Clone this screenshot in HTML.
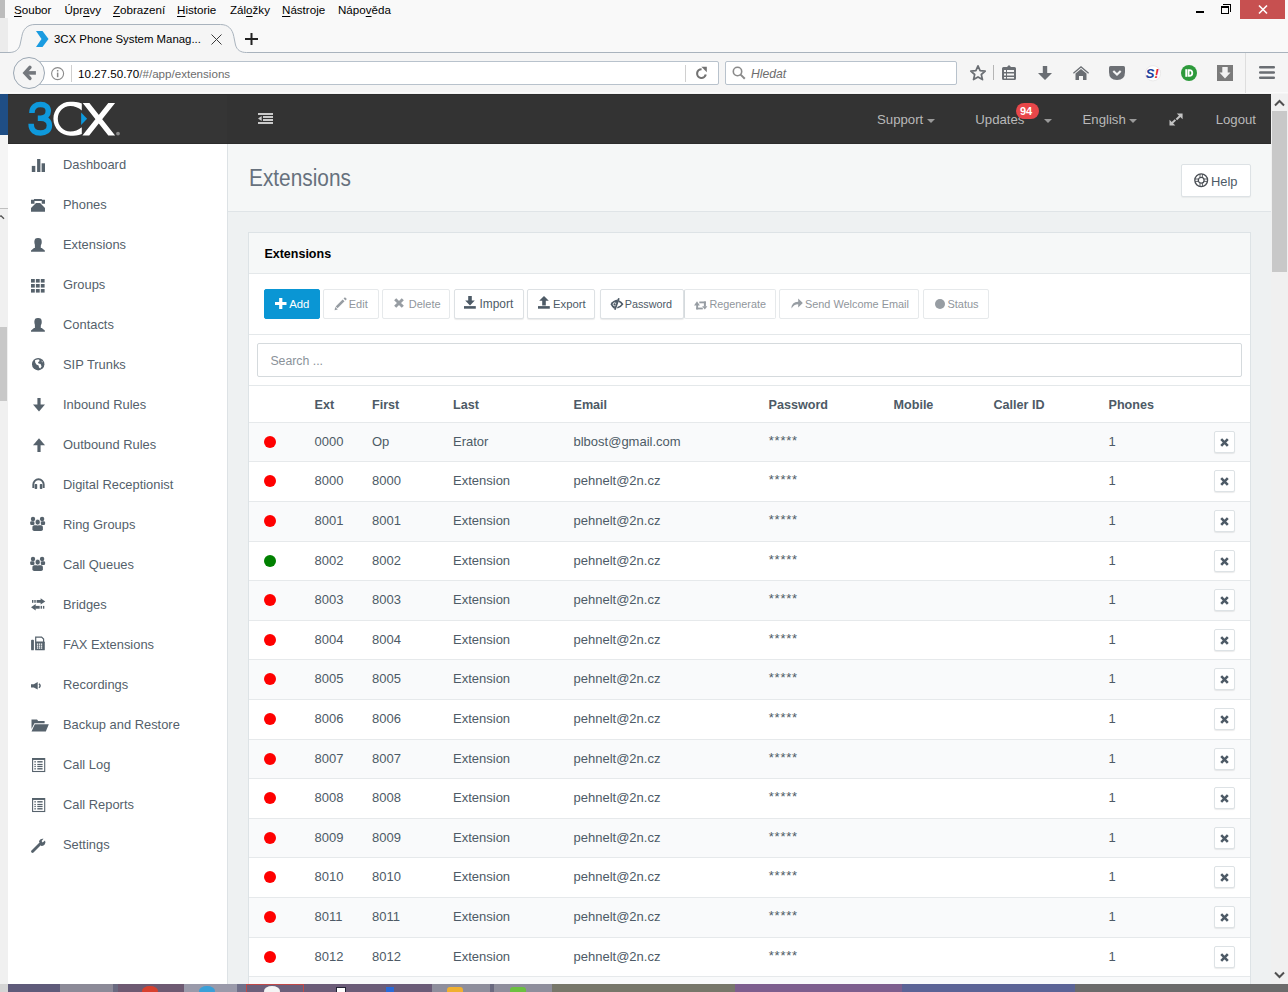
<!DOCTYPE html>
<html><head><meta charset="utf-8">
<style>
*{box-sizing:border-box;margin:0;padding:0}
html,body{width:1288px;height:992px;overflow:hidden;background:#f9f9f9;font-family:"Liberation Sans",sans-serif;position:relative}
.a{position:absolute}
.t{position:absolute;white-space:nowrap;line-height:1}
svg{position:absolute;overflow:visible}
.menu{font-size:11.6px;color:#000;top:3.9px}
.menu u{text-decoration:underline;text-underline-offset:1.5px;text-decoration-thickness:1px}
.hl{font-size:13.2px;color:#b9b9b9;top:112.8px}
.caret{position:absolute;width:0;height:0;border-left:4px solid transparent;border-right:4px solid transparent;border-top:4px solid #9a9a9a}
.si{font-size:12.9px;color:#545f6b;left:63px}
.btn{position:absolute;top:289px;height:30px;border:1px solid #e6e9eb;border-radius:2px;background:#fff;white-space:nowrap}
.btn.en{border-color:#dde1e4;box-shadow:0 1px 1px rgba(0,0,0,.08)}
.bt{position:absolute;top:9px;font-size:11px;line-height:1;color:#90969c}
.en .bt{color:#4d5a66}
.row{position:absolute;left:249px;width:1001px;height:39.57px;border-top:1px solid #e6e9eb}
.row.odd{background:#f9fafb}
.row .t{font-size:13px;color:#4d5a66;top:11.8px}
.dot{position:absolute;left:14.9px;top:12.5px;width:12px;height:12px;border-radius:50%;background:#f00}
.xb{position:absolute;left:965px;top:8.3px;width:20.5px;height:21.5px;border:1px solid #dde2e5;border-radius:2px;background:#fff;box-shadow:0 1px 1px rgba(0,0,0,.08)}
.xb svg{left:4.5px;top:5.5px}
.th{font-size:12.6px;font-weight:bold;color:#4d5a66;top:399.3px}
</style></head>
<body>
<!-- ===== window / menu ===== -->
<div class="a" style="left:0;top:0;width:5px;height:18px;background:#bcbcbc"></div>
<div class="a" style="left:0;top:18px;width:8px;height:34px;background:#ececec"></div>
<div class="t menu" style="left:14px"><u>S</u>oubor</div>
<div class="t menu" style="left:64.4px">Úpr<u>a</u>vy</div>
<div class="t menu" style="left:113px"><u>Z</u>obrazení</div>
<div class="t menu" style="left:177px"><u>H</u>istorie</div>
<div class="t menu" style="left:230px">Zál<u>o</u>žky</div>
<div class="t menu" style="left:282px"><u>N</u>ástroje</div>
<div class="t menu" style="left:338px">Nápo<u>v</u>ěda</div>
<div class="a" style="left:1196px;top:11px;width:8px;height:2px;background:#000"></div>
<div class="a" style="left:1221px;top:6px;width:8px;height:8px;border:1px solid #000;border-top-width:2px"></div>
<div class="a" style="left:1223px;top:4px;width:8px;height:8px;border-top:1px solid #000;border-right:1px solid #000"></div>
<div class="a" style="left:1240px;top:0;width:45px;height:19px;background:#c75050"></div>
<svg style="left:1258px;top:5px" width="10" height="9"><path d="M1 0.5L9 8.5M9 0.5L1 8.5" stroke="#fff" stroke-width="1.6"/></svg>
<!-- tab -->
<svg style="left:0;top:0" width="1288" height="54"><path d="M0 52.5H9C15 52.5 18.5 50 20 45L21.8 36.5C23 29 27.5 24.5 35 24.5H220.5C228 24.5 232.5 29 233.8 36.5L235.5 45C237 50 240.5 52.5 246.5 52.5H1288V54H0Z" fill="#f5f5f5"/><path d="M0 52.5H9C15 52.5 18.5 50 20 45L21.8 36.5C23 29 27.5 24.5 35 24.5H220.5C228 24.5 232.5 29 233.8 36.5L235.5 45C237 50 240.5 52.5 246.5 52.5H1288" fill="none" stroke="#a9b3bd" stroke-width="1"/></svg>
<svg style="left:35.5px;top:31px" width="13" height="16"><path d="M0 0H6.5L12.5 8L6.5 16H0L5.5 8Z" fill="#1a9be0"/></svg>
<div class="t" style="left:54px;top:34.2px;font-size:11.4px;color:#000">3CX Phone System Manag...</div>
<svg style="left:211px;top:34px" width="11" height="11"><path d="M0.5 0.5L10.5 10.5M10.5 0.5L0.5 10.5" stroke="#3a3a3a" stroke-width="1"/></svg>
<svg style="left:244.5px;top:33px" width="13" height="12"><path d="M6.5 0V12M0 6H13" stroke="#222" stroke-width="2"/></svg>
<!-- nav -->
<div class="a" style="left:0;top:53px;width:1288px;height:41px;background:#f5f5f5"></div>
<div class="a" style="left:0;top:92px;width:1288px;height:1px;background:#fafafa"></div>
<div class="a" style="left:30px;top:61px;width:689px;height:24px;background:#fff;border:1px solid #b8c2cc;border-radius:0 2px 2px 0"></div>
<div class="a" style="left:13px;top:57px;width:32px;height:32px;border-radius:50%;border:1px solid #9ba7b3;background:#f5f5f5"></div>
<svg style="left:20px;top:64px" width="18" height="18"><path d="M9.9 3.4L4.9 8.9L9.9 14.4" stroke="#74787d" stroke-width="3.5" stroke-linecap="round" fill="none"/><path d="M5 8.9H15.9" stroke="#74787d" stroke-width="3.6"/></svg>
<svg style="left:51px;top:66.5px" width="14" height="14"><circle cx="6.6" cy="6.6" r="6" fill="none" stroke="#8a8a8a" stroke-width="1.1"/><rect x="5.9" y="5.6" width="1.5" height="4.6" fill="#8a8a8a"/><rect x="5.9" y="3" width="1.5" height="1.5" fill="#8a8a8a"/></svg>
<div class="a" style="left:71px;top:64.5px;width:1px;height:17px;background:#cfcfcf"></div>
<div class="t" style="left:78px;top:68.1px;font-size:11.6px;color:#000">10.27.50.70<span style="color:#6d6d6d">/#/app/extensions</span></div>
<div class="a" style="left:685px;top:64.5px;width:1px;height:17px;background:#d0d0d0"></div>
<svg style="left:695px;top:66px" width="13" height="13"><path d="M6.6 3.2A4.4 4.4 0 1 0 10.8 8.6" fill="none" stroke="#737373" stroke-width="2.1"/><path d="M6.4 0.8H11.8V6.2Z" fill="#737373"/></svg>
<div class="a" style="left:725px;top:61px;width:232px;height:24px;background:#fff;border:1px solid #b8c2cc;border-radius:2px"></div>
<svg style="left:732px;top:66px" width="14" height="14"><circle cx="5.5" cy="5.5" r="4.2" fill="none" stroke="#8a8a8a" stroke-width="1.6"/><path d="M8.6 8.6L12.8 12.8" stroke="#8a8a8a" stroke-width="2"/></svg>
<div class="t" style="left:751px;top:67.5px;font-size:12.2px;color:#6d6d6d;font-style:italic">Hledat</div>
<svg style="left:969px;top:64px" width="18" height="18"><path d="M9 1.8L11.1 6.6L16.2 7.1L12.3 10.5L13.5 15.6L9 12.9L4.5 15.6L5.7 10.5L1.8 7.1L6.9 6.6Z" fill="none" stroke="#6a6e73" stroke-width="1.7" stroke-linejoin="round"/></svg>
<div class="a" style="left:993px;top:65px;width:1px;height:15px;background:#b5b5b5"></div>
<svg style="left:1002px;top:65px" width="14" height="15"><path d="M7 0L9 2H12.5Q14 2 14 3.5V13.5Q14 15 12.5 15H1.5Q0 15 0 13.5V3.5Q0 2 1.5 2H5Z" fill="#6a6e73"/><rect x="2" y="5" width="2" height="2" fill="#f5f5f5"/><rect x="5" y="5" width="7" height="2" fill="#f5f5f5"/><rect x="2" y="8.5" width="2" height="2" fill="#f5f5f5"/><rect x="5" y="8.5" width="7" height="2" fill="#f5f5f5"/><rect x="2" y="12" width="2" height="1.5" fill="#f5f5f5"/><rect x="5" y="12" width="7" height="1.5" fill="#f5f5f5"/></svg>
<svg style="left:1038px;top:66px" width="14" height="14"><path d="M4.8 0H9.2V7H14L7 14L0 7H4.8Z" fill="#6a6e73"/></svg>
<svg style="left:1073px;top:66px" width="16" height="14"><path d="M8 0L16 6.8L15.2 7.7L8 1.7L0.8 7.7L0 6.8Z" fill="#6a6e73"/><path d="M2.5 7.5L8 3L13.5 7.5V14H10V10H6V14H2.5Z" fill="#6a6e73"/></svg>
<svg style="left:1109px;top:66px" width="16" height="14"><path d="M0 1.5Q0 0 1.5 0H14.5Q16 0 16 1.5V6Q16 14 8 14Q0 14 0 6Z" fill="#6d7075"/><path d="M4.3 5L8 8.6L11.7 5" fill="none" stroke="#f5f5f5" stroke-width="2.1"/></svg>
<svg style="left:1145px;top:65px" width="16" height="16"><circle cx="8" cy="8.3" r="7.6" fill="#fff" stroke="#ddd" stroke-width="0.6"/><text x="0.8" y="13" font-family="Liberation Sans" font-weight="bold" font-style="italic" font-size="13" fill="#1d3f9c">S</text><text x="9.5" y="13" font-family="Liberation Sans" font-weight="bold" font-style="italic" font-size="13" fill="#e3262e">!</text></svg>
<svg style="left:1181px;top:65px" width="16" height="16"><circle cx="8" cy="8" r="8" fill="#2d9a3b"/><rect x="4.3" y="4.2" width="2" height="7.6" fill="#fff"/><path d="M7.6 5.1H8.4A2.9 2.9 0 0 1 8.4 10.9H7.6Z" fill="none" stroke="#fff" stroke-width="1.8"/></svg>
<svg style="left:1217px;top:65px" width="16" height="16"><rect width="16" height="16" fill="#7b7b7b"/><path d="M5.3 2H10.7V7.5H13.5L8 13.5L2.5 7.5H5.3Z" fill="#f2f2f2"/></svg>
<div class="a" style="left:1245px;top:53px;width:1px;height:40px;background:#dedede"></div>
<svg style="left:1259px;top:66px" width="16" height="13"><path d="M1.2 1.3H14.8M1.2 6.5H14.8M1.2 11.7H14.8" stroke="#6a6e73" stroke-width="2.5" stroke-linecap="round"/></svg>
<!-- ===== page ===== -->
<div class="a" style="left:0;top:94px;width:8px;height:890px;background:#f0f0f0"></div>
<div class="a" style="left:0;top:94px;width:8px;height:41px;background:#1f4e85"></div>
<div class="a" style="left:0;top:135px;width:8px;height:73px;background:#f5f5f5"></div>
<div class="a" style="left:0;top:208px;width:8px;height:1px;background:#c0c0c0"></div>
<div class="a" style="left:0;top:327px;width:7px;height:74px;background:#c8c8c8"></div><svg style="left:0;top:215px" width="6" height="6"><path d="M0 1.5L1 0.8L4 3.8" stroke="#505050" stroke-width="1.4" fill="none"/></svg>

<div class="a" style="left:8px;top:94px;width:1263px;height:50px;background:#333;border-top:1px solid #2c2c2c;border-bottom:1px solid #2c2c2c"></div><div class="a" style="left:8px;top:95px;width:219px;height:48px;background:#353535"></div>
<svg style="left:28px;top:102px" width="92" height="34">
<path d="M3.9 11C3.9 4.8 8.2 2.6 12.6 2.6C17.5 2.6 20.3 5.2 20.3 8.8C20.3 13 17 16.2 12.8 16.2H9.8M9.8 16.2H12.8C18 16.2 21.4 18.8 21.4 23.5C21.4 28.5 17.4 31 12.6 31C7.5 31 3.1 29 3.1 21.8" fill="none" stroke="#0e99dc" stroke-width="5.5"/>
<path d="M53.8 1.6C50 -0.2 46 -0.2 42.3 -0.2C33 -0.2 25.4 7.4 25.4 16.8C25.4 26.2 33 33.7 42.3 33.7C46 33.7 50 33.5 53.8 32V25.2C50.5 28 46.5 29.5 42.3 29.5C35.4 29.5 29.8 23.8 29.8 16.8C29.8 9.8 35.4 4 42.3 4C46.5 4 50.5 5.6 53.8 8.5Z" fill="#fff"/>
<path d="M53.1 10.6L59.1 16.85L53.1 23.1Z" fill="#0e99dc"/>
<path d="M54.7 0.9H61.4L87.1 33.5H80.3Z M80.3 0.9H87.1L61.2 33.5H54.4Z" fill="#fff"/>
<circle cx="90" cy="31.6" r="1.9" fill="#8a8a8a"/>
</svg>
<svg style="left:257.6px;top:113px" width="15" height="11"><path d="M0 1H15M5 4H15M5 7H15M0 10H15" stroke="#cacaca" stroke-width="2"/><path d="M0 5.5L3.7 3V8Z" fill="#cacaca"/></svg>
<div class="t hl" style="left:877px">Support</div>
<div class="caret" style="left:927px;top:119px"></div>
<div class="t hl" style="left:975.3px">Updates</div>
<div class="a" style="left:1016px;top:102.7px;width:23px;height:16px;border-radius:8px;background:#e8474a"></div>
<div class="t" style="left:1020px;top:106px;font-size:11px;font-weight:bold;color:#fff">94</div>
<div class="caret" style="left:1044px;top:119px"></div>
<div class="t hl" style="left:1082.5px">English</div>
<div class="caret" style="left:1129px;top:119px"></div>
<svg style="left:1169px;top:112.5px" width="14" height="13"><path d="M7.8 0.5H13.6V6.3Z M0.5 6.8V12.6H6.3Z" fill="#c4c4c4"/><path d="M11.8 2.3L7.4 6.4M2.3 10.8L6.4 6.9" stroke="#c4c4c4" stroke-width="2"/></svg>
<div class="t hl" style="left:1215.7px">Logout</div>

<div class="a" style="left:8px;top:144px;width:220px;height:840px;background:#fff;border-right:1px solid #dde2e5"></div>
<div class="t si" style="top:159.1px">Dashboard</div>
<div class="t si" style="top:199.1px">Phones</div>
<div class="t si" style="top:239.1px">Extensions</div>
<div class="t si" style="top:279.1px">Groups</div>
<div class="t si" style="top:319.1px">Contacts</div>
<div class="t si" style="top:359.1px">SIP Trunks</div>
<div class="t si" style="top:399.1px">Inbound Rules</div>
<div class="t si" style="top:439.1px">Outbound Rules</div>
<div class="t si" style="top:479.1px">Digital Receptionist</div>
<div class="t si" style="top:519.1px">Ring Groups</div>
<div class="t si" style="top:559.1px">Call Queues</div>
<div class="t si" style="top:599.1px">Bridges</div>
<div class="t si" style="top:639.1px">FAX Extensions</div>
<div class="t si" style="top:679.1px">Recordings</div>
<div class="t si" style="top:719.1px">Backup and Restore</div>
<div class="t si" style="top:759.1px">Call Log</div>
<div class="t si" style="top:799.1px">Call Reports</div>
<div class="t si" style="top:839.1px">Settings</div>
<!-- sidebar icons -->
<svg style="left:31px;top:158px" width="15" height="14" fill="#56626c"><rect x="0.8" y="7.9" width="3.5" height="6.1"/><rect x="6.1" y="1" width="3.3" height="13"/><rect x="10.6" y="5.3" width="3.4" height="8.7"/></svg>
<svg style="left:31px;top:199px" width="15" height="13" fill="#56626c"><path d="M3 0H10.7L11 0.8H14V4.8H10.7V2H3.5V4.8H0V0.8H3Z"/><path d="M5 4H9.1L14 9V12.7H0V9Z"/></svg>
<svg style="left:31px;top:238px" width="15" height="14" fill="#56626c"><rect x="3.4" y="0" width="7.3" height="7.9" rx="3.4"/><rect x="3.9" y="6" width="5.9" height="4.5"/><path d="M3 10H10.8L13.85 12.4V13.8H0V12.4Z"/></svg>
<svg style="left:31px;top:278.6px" width="14" height="14" fill="#56626c"><rect x="0" y="0" width="3.8" height="3.6"/><rect x="4.9" y="0" width="3.8" height="3.6"/><rect x="9.8" y="0" width="3.8" height="3.6"/><rect x="0" y="5" width="3.8" height="3.6"/><rect x="4.9" y="5" width="3.8" height="3.6"/><rect x="9.8" y="5" width="3.8" height="3.6"/><rect x="0" y="10" width="3.8" height="3.6"/><rect x="4.9" y="10" width="3.8" height="3.6"/><rect x="9.8" y="10" width="3.8" height="3.6"/></svg>
<svg style="left:31px;top:318px" width="15" height="14" fill="#56626c"><rect x="3.4" y="0" width="7.3" height="7.9" rx="3.4"/><rect x="3.9" y="6" width="5.9" height="4.5"/><path d="M3 10H10.8L13.85 12.4V13.8H0V12.4Z"/></svg>
<svg style="left:32px;top:358px" width="13" height="13"><circle cx="6.2" cy="6.2" r="6.2" fill="#56626c"/><path d="M3 2.2Q5 1 7 1.6L7.6 3L6 4.2L6.6 5.6L8.6 6L9.6 8.5L8.2 10.6L7 9.6L6.6 7.4L4.4 6.6L3.2 4.6Z" fill="#fff"/><path d="M9.3 2.6L10.6 3.4L10.4 4.8Z" fill="#fff"/></svg>
<svg style="left:32.7px;top:398px" width="12" height="14" fill="#56626c"><rect x="4.4" y="0" width="3.2" height="7.5"/><path d="M0 6.6H12L6 13.6Z"/></svg>
<svg style="left:32.7px;top:438px" width="12" height="14" fill="#56626c"><rect x="4.4" y="6.5" width="3.2" height="7.5"/><path d="M0 7.2H12L6 0.2Z"/></svg>
<svg style="left:31.7px;top:478px" width="13" height="11"><path d="M1.3 10V6.5A5.2 5.2 0 0 1 11.7 6.5V10" fill="none" stroke="#56626c" stroke-width="1.9"/><rect x="2.6" y="6" width="2.6" height="5" rx="0.7" fill="#56626c"/><rect x="7.8" y="6" width="2.6" height="5" rx="0.7" fill="#56626c"/></svg>
<svg style="left:30.4px;top:516.7px" width="16" height="14" fill="#56626c"><circle cx="3" cy="2" r="2.2"/><circle cx="12.1" cy="2" r="2.2"/><rect x="0.2" y="4.3" width="4.3" height="3.6" rx="1.2"/><rect x="10.8" y="4.3" width="4.3" height="3.6" rx="1.2"/><rect x="2.4" y="8.3" width="10.5" height="5.7" rx="1.8"/><ellipse cx="7.7" cy="5.1" rx="2.6" ry="2.9" stroke="#fff" stroke-width="0.7"/></svg>
<svg style="left:30.4px;top:556.7px" width="16" height="14" fill="#56626c"><circle cx="3" cy="2" r="2.2"/><circle cx="12.1" cy="2" r="2.2"/><rect x="0.2" y="4.3" width="4.3" height="3.6" rx="1.2"/><rect x="10.8" y="4.3" width="4.3" height="3.6" rx="1.2"/><rect x="2.4" y="8.3" width="10.5" height="5.7" rx="1.8"/><ellipse cx="7.7" cy="5.1" rx="2.6" ry="2.9" stroke="#fff" stroke-width="0.7"/></svg>
<svg style="left:31px;top:598px" width="15" height="13" fill="#56626c"><rect x="1" y="2" width="1.4" height="2.8"/><rect x="3.3" y="2" width="1.4" height="2.8"/><rect x="5.6" y="2" width="4.5" height="2.8"/><path d="M9.6 0.2L14.3 3.4L9.6 6.6Z"/><path d="M0 9.3L4.7 6.1V12.5Z"/><rect x="4.2" y="7.9" width="4.5" height="2.8"/><rect x="9.6" y="7.9" width="1.4" height="2.8"/><rect x="11.9" y="7.9" width="1.4" height="2.8"/></svg>
<svg style="left:31px;top:636.4px" width="15" height="15" fill="#56626c"><rect x="0.1" y="3.7" width="2.8" height="10.6" rx="0.9"/><rect x="4.1" y="5.6" width="9.7" height="8.7" rx="0.6"/><path d="M4.7 1.1H10.6L12.6 3.1V6H4.7Z" fill="#fff" stroke="#56626c" stroke-width="1.2"/><g fill="#fff"><rect x="5.9" y="7.5" width="1.3" height="1.3"/><rect x="7.9" y="7.5" width="1.3" height="1.3"/><rect x="9.9" y="7.5" width="1.3" height="1.3"/><rect x="5.9" y="9.5" width="1.3" height="1.3"/><rect x="7.9" y="9.5" width="1.3" height="1.3"/><rect x="9.9" y="9.5" width="1.3" height="1.3"/><rect x="5.9" y="11.4" width="1.3" height="1.3"/><rect x="7.9" y="11.4" width="1.3" height="1.3"/><rect x="9.9" y="11.4" width="1.3" height="1.3"/></g></svg>
<svg style="left:30.7px;top:681.5px" width="12" height="8" fill="#56626c"><path d="M0 2.2H2.8L6.7 0V7.6L2.8 5.4H0Z"/><path d="M8 1.8Q10.2 3.8 8 5.8" fill="none" stroke="#56626c" stroke-width="1.5"/></svg>
<svg style="left:30.9px;top:719px" width="18" height="13" fill="#56626c"><path d="M0.5 0.5H6L7.2 2H13.6V4.2H3.4L0.5 10Z"/><path d="M3.8 5.2H17.8L14.8 12.6H0.5Z"/></svg>
<svg style="left:32px;top:758px" width="14" height="14"><rect x="0.6" y="0.6" width="12.1" height="12.9" fill="none" stroke="#56626c" stroke-width="1.1"/><rect x="0.05" y="0.05" width="12.7" height="1.9" fill="#56626c"/><g fill="#56626c"><rect x="2.4" y="3.1" width="1.4" height="1.4"/><rect x="5.3" y="3.1" width="5.3" height="1.4"/><rect x="2.4" y="5.9" width="1.4" height="1.2"/><rect x="5.3" y="5.9" width="5.3" height="1.2"/><rect x="2.4" y="7.9" width="1.4" height="1.2"/><rect x="5.3" y="7.9" width="5.3" height="1.2"/><rect x="2.4" y="10.1" width="1.4" height="1.4"/><rect x="5.3" y="10.1" width="5.3" height="1.4"/></g></svg>
<svg style="left:32px;top:798px" width="14" height="14"><rect x="0.6" y="0.6" width="12.1" height="12.9" fill="none" stroke="#56626c" stroke-width="1.1"/><rect x="0.05" y="0.05" width="12.7" height="1.9" fill="#56626c"/><g fill="#56626c"><rect x="2.4" y="3.1" width="1.4" height="1.4"/><rect x="5.3" y="3.1" width="5.3" height="1.4"/><rect x="2.4" y="5.9" width="1.4" height="1.2"/><rect x="5.3" y="5.9" width="5.3" height="1.2"/><rect x="2.4" y="7.9" width="1.4" height="1.2"/><rect x="5.3" y="7.9" width="5.3" height="1.2"/><rect x="2.4" y="10.1" width="1.4" height="1.4"/><rect x="5.3" y="10.1" width="5.3" height="1.4"/></g></svg>
<svg style="left:31px;top:837.8px" width="15" height="15"><path d="M1.5 13.5L9 6" stroke="#56626c" stroke-width="2.8" stroke-linecap="round"/><path d="M8 3.5A3.6 3.6 0 0 1 12.5 0.8L10.6 3L11.6 4.4L14 2.6A3.6 3.6 0 0 1 10 7.8Z" fill="#56626c"/></svg>

<!-- content -->
<div class="a" style="left:228px;top:144px;width:1043px;height:840px;background:#eef1f2"></div>
<div class="a" style="left:228px;top:144px;width:1043px;height:68px;background:#f5f7f7;border-bottom:1px solid #dfe4e7"></div>
<div class="t" style="left:249px;top:167.3px;font-size:23.5px;color:#66717d;transform:scaleX(0.887);transform-origin:0 0">Extensions</div>
<div class="a" style="left:1181px;top:164px;width:69.5px;height:33px;background:#fff;border:1px solid #dde2e5;border-radius:2px;box-shadow:0 1px 1px rgba(0,0,0,.05)"></div>
<svg style="left:1193.5px;top:173px" width="15" height="15"><circle cx="7.2" cy="7.2" r="6.4" fill="none" stroke="#4a4f55" stroke-width="1.3"/><circle cx="7.2" cy="7.2" r="2.9" fill="none" stroke="#4a4f55" stroke-width="1.3"/><path d="M6 1V4.3M8.4 1V4.3M6 10.1V13.4M8.4 10.1V13.4M1 6H4.3M1 8.4H4.3M10.1 6H13.4M10.1 8.4H13.4" stroke="#4a4f55" stroke-width="0.9"/></svg>
<div class="t" style="left:1211px;top:176.2px;font-size:12.9px;color:#4d5a66">Help</div>

<div class="a" style="left:248px;top:232px;width:1003px;height:760px;background:#fff;border:1px solid #dde3e6"></div>
<div class="a" style="left:249px;top:233px;width:1001px;height:41px;background:#f6f8f8;border-bottom:1px solid #e4e8ea"></div>
<div class="t" style="left:264.4px;top:248.2px;font-size:12.5px;font-weight:bold;color:#000">Extensions</div>
<div class="a" style="left:249px;top:334px;width:1001px;height:1px;background:#e4e8ea"></div>
<div class="a" style="left:249px;top:385px;width:1001px;height:1px;background:#e4e8ea"></div>

<div class="btn" style="left:264px;width:56px;background:#0a96d4;border-color:#0a96d4"><svg style="left:10px;top:8.2px" width="11.5" height="11"><path d="M5.75 0V11M0 5.5H11.5" stroke="#fff" stroke-width="3.2"/></svg><span class="bt" style="left:24.2px;color:#fff;font-size:11.35px;top:9.2px">Add</span></div>
<div class="btn" style="left:323.4px;width:55.4px"><svg style="left:9.6px;top:6.5px" width="14" height="14"><path d="M2.6 10.4L9.6 3.4M10.5 2.5L11.9 1.1" stroke="#979da3" stroke-width="2.7"/><path d="M0.6 13.2L1.2 10L3.8 12.6Z" fill="#979da3"/></svg><span class="bt" style="left:24.4px">Edit</span></div>
<div class="btn" style="left:382.4px;width:68.1px"><svg style="left:11px;top:8.2px" width="10" height="10"><path d="M1.2 1.2L8.8 8.8M8.8 1.2L1.2 8.8" stroke="#979da3" stroke-width="3"/></svg><span class="bt" style="left:25.4px">Delete</span></div>
<div class="btn en" style="left:453.5px;width:70.3px"><svg style="left:9.8px;top:6px" width="12" height="13" fill="#4d5a66"><path d="M4.2 0H7.8V4.6H10.8L6 9.4L1.2 4.6H4.2Z"/><rect x="0" y="10.1" width="11.8" height="2.6"/></svg><span class="bt" style="left:25px;font-size:11.9px;top:8.6px">Import</span></div>
<div class="btn en" style="left:527.2px;width:68px"><svg style="left:9.6px;top:6px" width="12" height="13" fill="#4d5a66"><path d="M4.2 9.4H7.8V4.8H10.8L6 0L1.2 4.8H4.2Z"/><rect x="0" y="10.1" width="11.8" height="2.6"/></svg><span class="bt" style="left:24.8px;font-size:11.3px;top:8.8px">Export</span></div>
<div class="btn en" style="left:599.5px;width:84px"><svg style="left:9.5px;top:7.5px" width="14" height="13"><path d="M0.5 6.2Q2.8 1.8 8 1.4L4.4 10.9Q1.9 9.4 0.5 6.2Z" fill="#4d5a66"/><circle cx="4.6" cy="6.3" r="1.5" fill="none" stroke="#fff" stroke-width="0.9"/><path d="M8.9 0.3L4.9 11.7" stroke="#4d5a66" stroke-width="1.7"/><path d="M8.6 3.1Q11.2 4.2 12.5 6.2Q11 8.8 7.3 9.7" fill="none" stroke="#4d5a66" stroke-width="1.6"/></svg><span class="bt" style="left:24.2px;font-size:10.8px">Password</span></div>
<div class="btn" style="left:683.5px;width:92.1px;border-left-color:#d5dadd"><svg style="left:9.5px;top:10.5px" width="14" height="9" fill="#979da3"><path d="M0 4.4L3 0.3L5.9 4.4Z"/><rect x="2.2" y="4" width="1.9" height="4.4"/><rect x="2.2" y="6.6" width="6.6" height="1.8"/><rect x="5.3" y="0.5" width="6.6" height="1.8"/><rect x="9.9" y="0.5" width="2" height="5"/><path d="M8.1 5.2H13.4L10.8 8.5Z"/></svg><span class="bt" style="left:25px;font-size:10.8px">Regenerate</span></div>
<div class="btn" style="left:779.4px;width:139.9px"><svg style="left:10.4px;top:8.3px" width="12" height="11"><path d="M0.5 10.5Q0.5 3.8 7.2 3.8V0.5L11.8 5L7.2 9.4V6.2Q2.8 6.2 0.5 10.5Z" fill="#979da3"/></svg><span class="bt" style="left:24.6px;font-size:10.9px">Send Welcome Email</span></div>
<div class="btn" style="left:923px;width:65.6px"><svg style="left:10.9px;top:9px" width="10" height="10"><circle cx="5" cy="5" r="5" fill="#979da3"/></svg><span class="bt" style="left:23.4px">Status</span></div>

<div class="a" style="left:257px;top:343px;width:985px;height:34px;border:1px solid #d5dadd;border-radius:2px;background:#fff"></div>
<div class="t" style="left:270.4px;top:355.2px;font-size:12.3px;color:#8a9299">Search ...</div>

<div class="t th" style="left:314.5px">Ext</div>
<div class="t th" style="left:372px">First</div>
<div class="t th" style="left:453px">Last</div>
<div class="t th" style="left:573.5px">Email</div>
<div class="t th" style="left:768.5px">Password</div>
<div class="t th" style="left:893.5px">Mobile</div>
<div class="t th" style="left:993.5px">Caller ID</div>
<div class="t th" style="left:1108.5px">Phones</div>
<div class="row odd" style="top:422px;height:39px"><div class="dot" style="background:#f00"></div><div class="t" style="left:65.5px">0000</div><div class="t" style="left:123px">Op</div><div class="t" style="left:204px">Erator</div><div class="t" style="left:324.5px">blbost@gmail.com</div><div class="t" style="left:519.8px;top:10.6px;letter-spacing:0.75px">*****</div><div class="t" style="left:859.5px">1</div><div class="xb"><svg width="9" height="9"><path d="M1.2 1.2L7.8 7.8M7.8 1.2L1.2 7.8" stroke="#4d5a66" stroke-width="2.6"/></svg></div></div>
<div class="row" style="top:461px;height:40px"><div class="dot" style="background:#f00"></div><div class="t" style="left:65.5px">8000</div><div class="t" style="left:123px">8000</div><div class="t" style="left:204px">Extension</div><div class="t" style="left:324.5px">pehnelt@2n.cz</div><div class="t" style="left:519.8px;top:10.6px;letter-spacing:0.75px">*****</div><div class="t" style="left:859.5px">1</div><div class="xb"><svg width="9" height="9"><path d="M1.2 1.2L7.8 7.8M7.8 1.2L1.2 7.8" stroke="#4d5a66" stroke-width="2.6"/></svg></div></div>
<div class="row odd" style="top:501px;height:40px"><div class="dot" style="background:#f00"></div><div class="t" style="left:65.5px">8001</div><div class="t" style="left:123px">8001</div><div class="t" style="left:204px">Extension</div><div class="t" style="left:324.5px">pehnelt@2n.cz</div><div class="t" style="left:519.8px;top:10.6px;letter-spacing:0.75px">*****</div><div class="t" style="left:859.5px">1</div><div class="xb"><svg width="9" height="9"><path d="M1.2 1.2L7.8 7.8M7.8 1.2L1.2 7.8" stroke="#4d5a66" stroke-width="2.6"/></svg></div></div>
<div class="row" style="top:541px;height:39px"><div class="dot" style="background:#008000"></div><div class="t" style="left:65.5px">8002</div><div class="t" style="left:123px">8002</div><div class="t" style="left:204px">Extension</div><div class="t" style="left:324.5px">pehnelt@2n.cz</div><div class="t" style="left:519.8px;top:10.6px;letter-spacing:0.75px">*****</div><div class="t" style="left:859.5px">1</div><div class="xb"><svg width="9" height="9"><path d="M1.2 1.2L7.8 7.8M7.8 1.2L1.2 7.8" stroke="#4d5a66" stroke-width="2.6"/></svg></div></div>
<div class="row odd" style="top:580px;height:40px"><div class="dot" style="background:#f00"></div><div class="t" style="left:65.5px">8003</div><div class="t" style="left:123px">8003</div><div class="t" style="left:204px">Extension</div><div class="t" style="left:324.5px">pehnelt@2n.cz</div><div class="t" style="left:519.8px;top:10.6px;letter-spacing:0.75px">*****</div><div class="t" style="left:859.5px">1</div><div class="xb"><svg width="9" height="9"><path d="M1.2 1.2L7.8 7.8M7.8 1.2L1.2 7.8" stroke="#4d5a66" stroke-width="2.6"/></svg></div></div>
<div class="row" style="top:620px;height:39px"><div class="dot" style="background:#f00"></div><div class="t" style="left:65.5px">8004</div><div class="t" style="left:123px">8004</div><div class="t" style="left:204px">Extension</div><div class="t" style="left:324.5px">pehnelt@2n.cz</div><div class="t" style="left:519.8px;top:10.6px;letter-spacing:0.75px">*****</div><div class="t" style="left:859.5px">1</div><div class="xb"><svg width="9" height="9"><path d="M1.2 1.2L7.8 7.8M7.8 1.2L1.2 7.8" stroke="#4d5a66" stroke-width="2.6"/></svg></div></div>
<div class="row odd" style="top:659px;height:40px"><div class="dot" style="background:#f00"></div><div class="t" style="left:65.5px">8005</div><div class="t" style="left:123px">8005</div><div class="t" style="left:204px">Extension</div><div class="t" style="left:324.5px">pehnelt@2n.cz</div><div class="t" style="left:519.8px;top:10.6px;letter-spacing:0.75px">*****</div><div class="t" style="left:859.5px">1</div><div class="xb"><svg width="9" height="9"><path d="M1.2 1.2L7.8 7.8M7.8 1.2L1.2 7.8" stroke="#4d5a66" stroke-width="2.6"/></svg></div></div>
<div class="row" style="top:699px;height:40px"><div class="dot" style="background:#f00"></div><div class="t" style="left:65.5px">8006</div><div class="t" style="left:123px">8006</div><div class="t" style="left:204px">Extension</div><div class="t" style="left:324.5px">pehnelt@2n.cz</div><div class="t" style="left:519.8px;top:10.6px;letter-spacing:0.75px">*****</div><div class="t" style="left:859.5px">1</div><div class="xb"><svg width="9" height="9"><path d="M1.2 1.2L7.8 7.8M7.8 1.2L1.2 7.8" stroke="#4d5a66" stroke-width="2.6"/></svg></div></div>
<div class="row odd" style="top:739px;height:39px"><div class="dot" style="background:#f00"></div><div class="t" style="left:65.5px">8007</div><div class="t" style="left:123px">8007</div><div class="t" style="left:204px">Extension</div><div class="t" style="left:324.5px">pehnelt@2n.cz</div><div class="t" style="left:519.8px;top:10.6px;letter-spacing:0.75px">*****</div><div class="t" style="left:859.5px">1</div><div class="xb"><svg width="9" height="9"><path d="M1.2 1.2L7.8 7.8M7.8 1.2L1.2 7.8" stroke="#4d5a66" stroke-width="2.6"/></svg></div></div>
<div class="row" style="top:778px;height:40px"><div class="dot" style="background:#f00"></div><div class="t" style="left:65.5px">8008</div><div class="t" style="left:123px">8008</div><div class="t" style="left:204px">Extension</div><div class="t" style="left:324.5px">pehnelt@2n.cz</div><div class="t" style="left:519.8px;top:10.6px;letter-spacing:0.75px">*****</div><div class="t" style="left:859.5px">1</div><div class="xb"><svg width="9" height="9"><path d="M1.2 1.2L7.8 7.8M7.8 1.2L1.2 7.8" stroke="#4d5a66" stroke-width="2.6"/></svg></div></div>
<div class="row odd" style="top:818px;height:39px"><div class="dot" style="background:#f00"></div><div class="t" style="left:65.5px">8009</div><div class="t" style="left:123px">8009</div><div class="t" style="left:204px">Extension</div><div class="t" style="left:324.5px">pehnelt@2n.cz</div><div class="t" style="left:519.8px;top:10.6px;letter-spacing:0.75px">*****</div><div class="t" style="left:859.5px">1</div><div class="xb"><svg width="9" height="9"><path d="M1.2 1.2L7.8 7.8M7.8 1.2L1.2 7.8" stroke="#4d5a66" stroke-width="2.6"/></svg></div></div>
<div class="row" style="top:857px;height:40px"><div class="dot" style="background:#f00"></div><div class="t" style="left:65.5px">8010</div><div class="t" style="left:123px">8010</div><div class="t" style="left:204px">Extension</div><div class="t" style="left:324.5px">pehnelt@2n.cz</div><div class="t" style="left:519.8px;top:10.6px;letter-spacing:0.75px">*****</div><div class="t" style="left:859.5px">1</div><div class="xb"><svg width="9" height="9"><path d="M1.2 1.2L7.8 7.8M7.8 1.2L1.2 7.8" stroke="#4d5a66" stroke-width="2.6"/></svg></div></div>
<div class="row odd" style="top:897px;height:40px"><div class="dot" style="background:#f00"></div><div class="t" style="left:65.5px">8011</div><div class="t" style="left:123px">8011</div><div class="t" style="left:204px">Extension</div><div class="t" style="left:324.5px">pehnelt@2n.cz</div><div class="t" style="left:519.8px;top:10.6px;letter-spacing:0.75px">*****</div><div class="t" style="left:859.5px">1</div><div class="xb"><svg width="9" height="9"><path d="M1.2 1.2L7.8 7.8M7.8 1.2L1.2 7.8" stroke="#4d5a66" stroke-width="2.6"/></svg></div></div>
<div class="row" style="top:937px;height:39px"><div class="dot" style="background:#f00"></div><div class="t" style="left:65.5px">8012</div><div class="t" style="left:123px">8012</div><div class="t" style="left:204px">Extension</div><div class="t" style="left:324.5px">pehnelt@2n.cz</div><div class="t" style="left:519.8px;top:10.6px;letter-spacing:0.75px">*****</div><div class="t" style="left:859.5px">1</div><div class="xb"><svg width="9" height="9"><path d="M1.2 1.2L7.8 7.8M7.8 1.2L1.2 7.8" stroke="#4d5a66" stroke-width="2.6"/></svg></div></div>
<div class="row odd" style="top:976px;height:40px"><div class="dot" style="background:#f00"></div><div class="t" style="left:65.5px">8013</div><div class="t" style="left:123px">8013</div><div class="t" style="left:204px">Extension</div><div class="t" style="left:324.5px">pehnelt@2n.cz</div><div class="t" style="left:519.8px;top:10.6px;letter-spacing:0.75px">*****</div><div class="t" style="left:859.5px">1</div><div class="xb"><svg width="9" height="9"><path d="M1.2 1.2L7.8 7.8M7.8 1.2L1.2 7.8" stroke="#4d5a66" stroke-width="2.6"/></svg></div></div>
<!-- scrollbar / taskbar -->
<div class="a" style="left:1271px;top:94px;width:17px;height:890px;background:#f0f0f0"></div>
<svg style="left:1274px;top:99px" width="11" height="8"><path d="M1 6.5L5.5 2L10 6.5" fill="none" stroke="#505050" stroke-width="2"/></svg>
<div class="a" style="left:1272px;top:111px;width:15px;height:161px;background:#c8c8c8"></div>
<svg style="left:1274px;top:971px" width="11" height="8"><path d="M1 1.5L5.5 6L10 1.5" fill="none" stroke="#505050" stroke-width="2"/></svg>
<div class="a" style="left:0px;top:984px;width:8px;height:8px;background:#d4d4d4"></div><div class="a" style="left:8px;top:984px;width:52px;height:8px;background:#5f5b7a"></div><div class="a" style="left:60px;top:984px;width:53px;height:8px;background:#8c8a98"></div><div class="a" style="left:113px;top:984px;width:5px;height:8px;background:#6a6a80"></div><div class="a" style="left:118px;top:984px;width:66px;height:8px;background:#6e5a72"></div><div class="a" style="left:184px;top:984px;width:53px;height:8px;background:#9a9aaa"></div><div class="a" style="left:237px;top:984px;width:9px;height:8px;background:#70708a"></div><div class="a" style="left:246px;top:984px;width:58px;height:8px;background:#6c5f7a"></div><div class="a" style="left:304px;top:984px;width:128px;height:8px;background:#6b5c78"></div><div class="a" style="left:432px;top:984px;width:58px;height:8px;background:#8e8e9c"></div><div class="a" style="left:490px;top:984px;width:4px;height:8px;background:#6a6a80"></div><div class="a" style="left:494px;top:984px;width:58px;height:8px;background:#8e8e9c"></div><div class="a" style="left:552px;top:984px;width:183px;height:8px;background:#77776a"></div><div class="a" style="left:735px;top:984px;width:167px;height:8px;background:#7d5e8e"></div><div class="a" style="left:902px;top:984px;width:173px;height:8px;background:#5b6396"></div><div class="a" style="left:1075px;top:984px;width:213px;height:8px;background:#6b6b6b"></div><div class="a" style="left:246px;top:984px;width:58px;height:8px;border:1px solid #c04848;border-bottom:none"></div><div class="a" style="left:142px;top:986px;width:16px;height:10px;border-radius:50%;background:#d8402e"></div><div class="a" style="left:199px;top:986px;width:16px;height:10px;border-radius:50%;background:#3aa0d8"></div><div class="a" style="left:264px;top:986px;width:16px;height:10px;border-radius:50%;background:#f4f4f4"></div><div class="a" style="left:336px;top:987px;width:10px;height:6px;background:#fff;border:1px solid #223"></div><div class="a" style="left:386px;top:987px;width:8px;height:6px;background:#2a6ad8"></div><div class="a" style="left:447px;top:987px;width:16px;height:6px;background:#f0b030;border-radius:3px 3px 0 0"></div><div class="a" style="left:510px;top:987px;width:16px;height:6px;background:#6cc040;border-radius:3px 3px 0 0"></div>
</body></html>
